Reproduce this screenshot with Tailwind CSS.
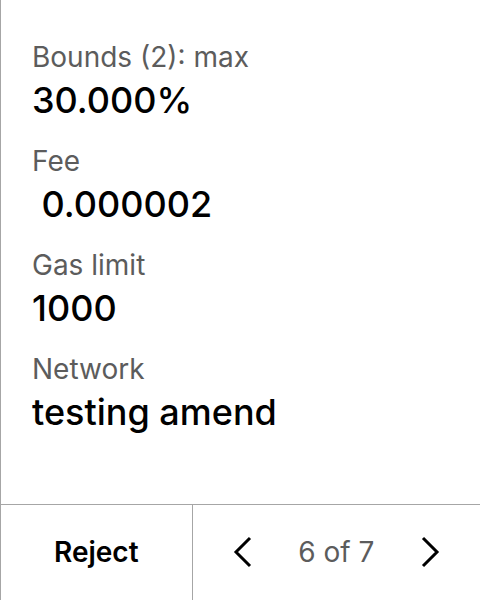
<!DOCTYPE html>
<html lang="en">
<head>
<meta charset="utf-8">
<meta name="viewport" content="width=device-width, initial-scale=1">
<title>Review transaction</title>
<script src="https://cdn.jsdelivr.net/npm/@tailwindcss/browser@4"></script>
</head>
<body class="bg-white font-['Inter',sans-serif] text-black">
<main class="flex min-h-screen flex-col border-l border-[#a6a6a6]">
  <dl class="flex grow flex-col gap-[18px] px-[31px] pt-10">
    <div>
      <dt class="text-[28px] leading-[34px] text-[#5c5c5c]">Bounds (2): max</dt>
      <dd class="text-[36px] leading-[52px] font-medium">30.000%</dd>
    </div>
    <div>
      <dt class="text-[28px] leading-[34px] text-[#5c5c5c]">Fee</dt>
      <dd class="whitespace-pre text-[36px] leading-[52px] font-medium"> 0.000002</dd>
    </div>
    <div>
      <dt class="text-[28px] leading-[34px] text-[#5c5c5c]">Gas limit</dt>
      <dd class="text-[36px] leading-[52px] font-medium">1000</dd>
    </div>
    <div>
      <dt class="text-[28px] leading-[34px] text-[#5c5c5c]">Network</dt>
      <dd class="text-[36px] leading-[52px] font-medium">testing amend</dd>
    </div>
  </dl>
  <footer class="flex h-24 border-t border-[#a6a6a6]">
    <button type="button" class="w-2/5 border-r border-[#a6a6a6] pb-0.5 text-[28px] font-semibold">Reject</button>
    <nav aria-label="Pages" class="flex grow items-center justify-between px-8 pb-0.5">
      <button type="button" aria-label="Previous page"><svg class="size-10" viewBox="0 0 40 40" fill="none" stroke="currentColor" stroke-width="3"><path d="M25 6 11 20l14 14"/></svg></button>
      <span class="text-[28px] text-[#5c5c5c]">6 of 7</span>
      <button type="button" aria-label="Next page"><svg class="size-10" viewBox="0 0 40 40" fill="none" stroke="currentColor" stroke-width="3"><path d="m15 6 14 14-14 14"/></svg></button>
    </nav>
  </footer>
</main>
</body>
</html>
